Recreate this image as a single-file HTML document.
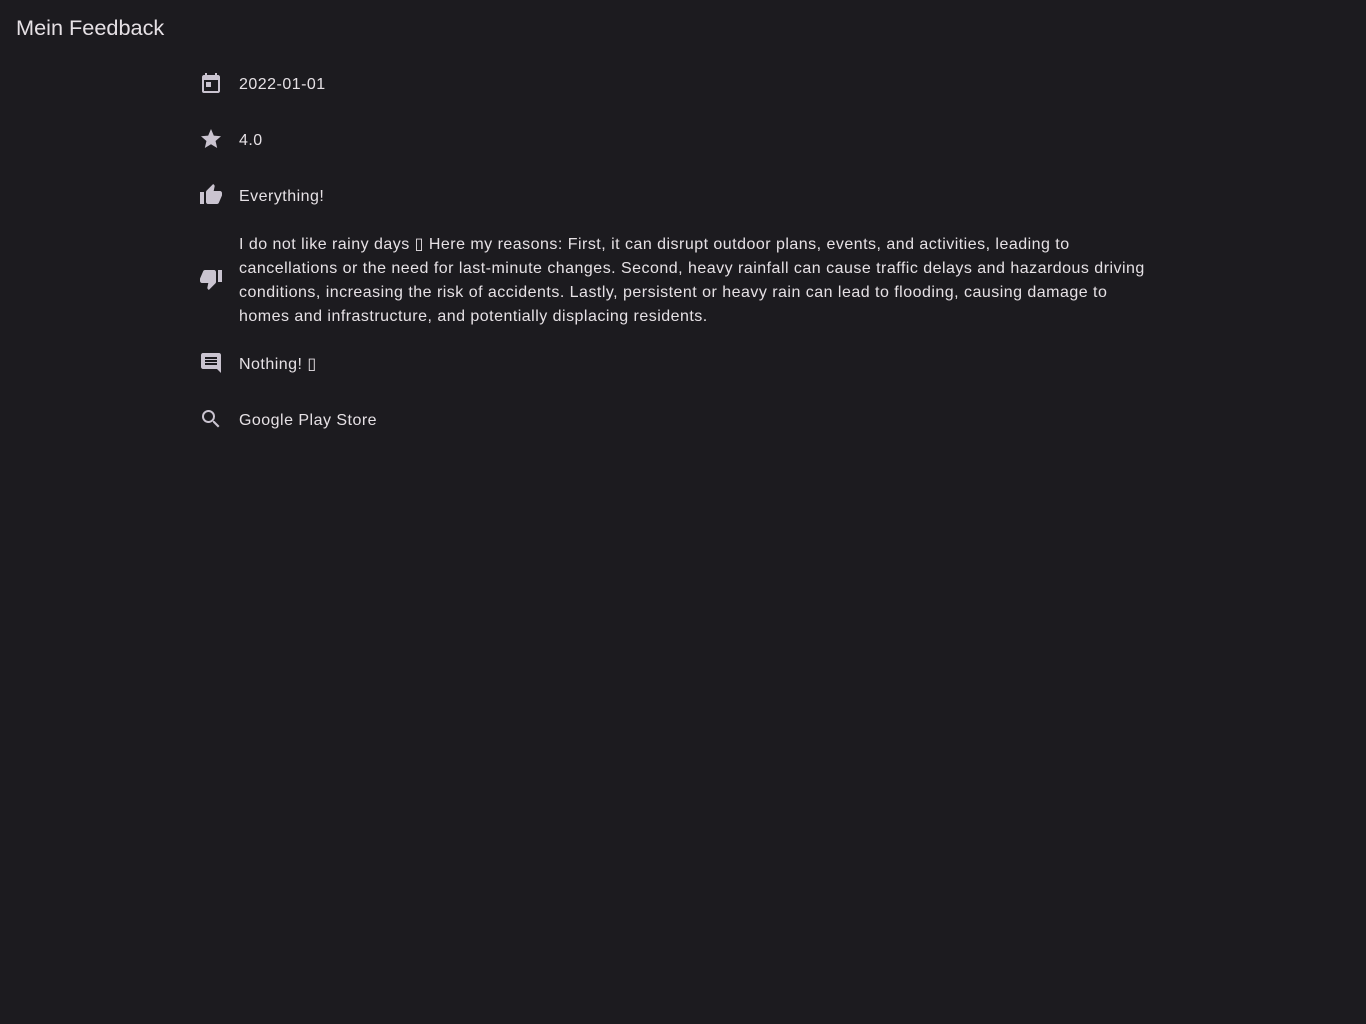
<!DOCTYPE html>
<html><head><meta charset="utf-8"><style>
html,body{margin:0;background:#1c1b1f;width:1366px;height:1024px;overflow:hidden}
body{font-family:"Liberation Sans","DejaVu Sans",sans-serif;color:#e6e1e5}
h1{position:absolute;left:16px;top:14px;margin:0;font-size:21.7px;font-weight:400;line-height:28px}
.list{position:absolute;left:183px;top:55px;width:1000px}
.row{display:flex;align-items:center;min-height:56px;padding:0 16px;box-sizing:border-box}
.row.big{padding-top:8px;padding-bottom:8px}
.row svg{width:24px;height:24px;flex:none;fill:#cac4d0;margin-right:16px}
.t{font-size:16px;line-height:24px;letter-spacing:0.48px;white-space:nowrap;position:relative;top:2px}
</style></head><body>
<h1>Mein Feedback</h1>
<div class="list">
<div class="row"><svg viewBox="0 0 24 24"><path d="M19 4h-1V2h-2v2H8V2H6v2H5c-1.11 0-1.99.9-1.99 2L3 20a2 2 0 0 0 2 2h14c1.1 0 2-.9 2-2V6c0-1.1-.9-2-2-2zm0 16H5V9h14v11zM7 11h5v5H7z"/></svg><span class="t">2022-01-01</span></div>
<div class="row"><svg viewBox="0 0 24 24"><path d="M12 17.27L18.18 21l-1.64-7.03L22 9.24l-7.19-.61L12 2 9.19 8.63 2 9.24l5.46 4.73L5.82 21z"/></svg><span class="t">4.0</span></div>
<div class="row"><svg viewBox="0 0 24 24"><path d="M1 21h4V9H1v12zm22-11c0-1.1-.9-2-2-2h-6.31l.95-4.570.03-.32c0-.41-.17-.79-.44-1.06L14.170 1 7.59 7.59C7.22 7.95 7 8.45 7 9v10c0 1.1.9 2 2 2h9c.83 0 1.54-.5 1.84-1.22l3.02-7.05c.09-.23.14-.47.14-.73v-2z"/></svg><span class="t">Everything!</span></div>
<div class="row big"><svg viewBox="0 0 24 24"><path d="M15 3H6c-.83 0-1.54.5-1.84 1.22l-3.02 7.05c-.09.23-.14.47-.14.73v2c0 1.1.9 2 2 2h6.31l-.95 4.57-.03.32c0 .41.17.79.44 1.06L9.83 23l6.59-6.59c.36-.36.58-.86.58-1.41V5c0-1.1-.9-2-2-2zm4 0v12h4V3h-4z"/></svg><span class="t">I do not like rainy days ▯ Here my reasons: First, it can disrupt outdoor plans, events, and activities, leading to<br>cancellations or the need for last-minute changes. Second, heavy rainfall can cause traffic delays and hazardous driving<br>conditions, increasing the risk of accidents. Lastly, persistent or heavy rain can lead to flooding, causing damage to<br>homes and infrastructure, and potentially displacing residents.</span></div>
<div class="row"><svg viewBox="0 0 24 24"><path d="M21.99 4c0-1.1-.89-2-1.99-2H4c-1.1 0-2 .9-2 2v12c0 1.1.9 2 2 2h14l4 4-.01-18zM18 14H6v-2h12v2zm0-3H6V9h12v2zm0-3H6V6h12v2z"/></svg><span class="t">Nothing! ▯</span></div>
<div class="row"><svg viewBox="0 0 24 24"><path d="M15.5 14h-.79l-.28-.27A6.470 6.470 0 0 0 16 9.5 6.5 6.5 0 1 0 9.5 16c1.61 0 3.09-.59 4.23-1.57l.27.28v.79l5 4.99L20.49 19l-4.99-5zm-6 0C7.01 14 5 11.99 5 9.5S7.01 5 9.5 5 14 7.01 14 9.5 11.99 14 9.5 14z"/></svg><span class="t">Google Play Store</span></div>
</div>
</body></html>
